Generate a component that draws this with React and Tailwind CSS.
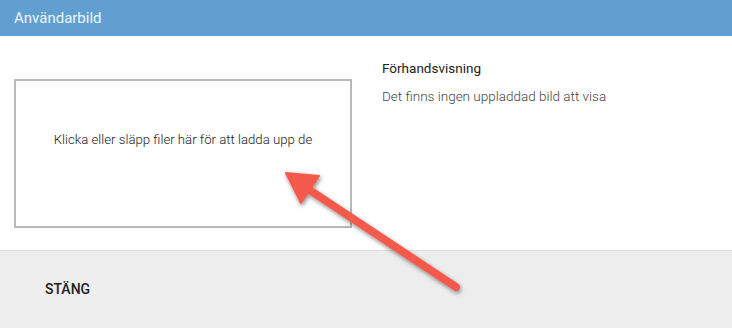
export default function App() {
  return (
    <div className="relative w-[732px] h-[328px] overflow-hidden bg-white font-['Roboto',sans-serif] text-[#333]">
      <div className="h-9 bg-[#619fd1] flex items-center px-[14px]">
        <span className="text-[15px] text-[#eef5fb]">Användarbild</span>
      </div>

      <div className="h-[215px] flex border-b border-[#dcdcdc]">
        <div className="pl-[14px] pt-[43px]">
          <div className="w-[338px] h-[149px] border-2 border-[#b8b8b8] flex items-center justify-center pb-[28px]">
            <span className="text-[13.2px] font-light text-[#222]">Klicka eller släpp filer här för att ladda upp de</span>
          </div>
        </div>
        <div className="pl-[30px] pt-[24px] flex flex-col gap-[12px]">
          <span className="text-[13.5px] leading-[16px] text-[#222]">Förhandsvisning</span>
          <span className="text-[13.5px] leading-[16px] font-light text-[#444]">Det finns ingen uppladdad bild att visa</span>
        </div>
      </div>

      <div className="h-[77px] bg-[#ededed] flex items-center pl-[45px]">
        <span className="text-[14px] font-medium text-[#222]">STÄNG</span>
      </div>

      <svg className="absolute left-0 top-0 pointer-events-none" width="732" height="328" viewBox="0 0 732 328">
        <defs>
          <filter id="sh" x="-20%" y="-20%" width="140%" height="140%">
            <feDropShadow dx="1" dy="2" stdDeviation="2" floodColor="#000" floodOpacity="0.45" />
          </filter>
        </defs>
        <g filter="url(#sh)" fill="#f45a4c" stroke="#f45a4c">
          <line x1="456" y1="287" x2="302" y2="185" strokeWidth="8" strokeLinecap="round" />
          <polygon points="286,173 319,176 301,203" strokeWidth="2" strokeLinejoin="round" />
        </g>
      </svg>
    </div>
  )
}
